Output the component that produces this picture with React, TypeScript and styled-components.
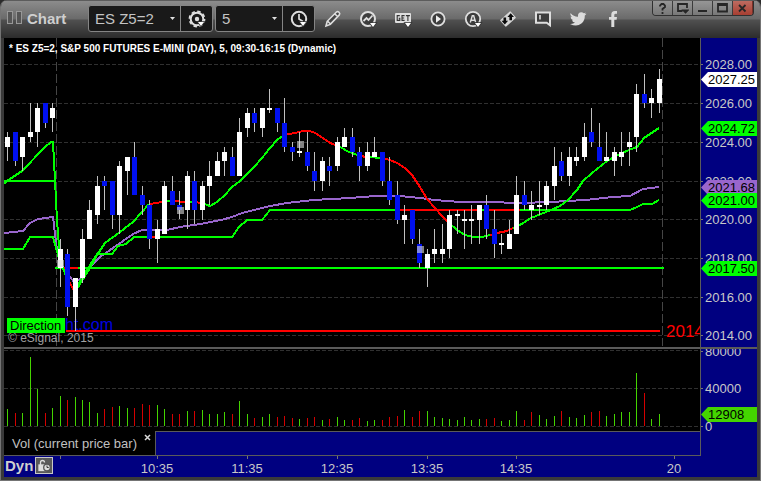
import React from "react";
import styled, { createGlobalStyle } from "styled-components";

const GlobalStyle = createGlobalStyle`
  *, *::before, *::after { box-sizing: border-box; }
  body { margin: 0; background: #2b2b2b; font-family: "Liberation Sans", Arial, sans-serif; }
  button, select { font: inherit; color: inherit; }
  svg { display: block; }
`;

const NAVY = "#000080";
const RULE = "#5a5a5a";

const Window = styled.div`
  display: flex;
  flex-direction: column;
  min-height: 100vh;
  border: 1px solid #747474;
  border-top: 0;
  border-radius: 7px 7px 0 0;
  background: #3a3a3a;
  overflow: hidden;
`;

const TitleBar = styled.header`
  display: flex;
  align-items: flex-start;
  height: 38px;
  padding-left: 6px;
  border-top: 1px solid #5c5c5c;
  background: linear-gradient(#8c8c8c 0, #6a6a6a 18px, #505050 19px, #2c2c2c 37px);
`;

const Brand = styled.div`
  display: flex;
  align-items: center;
  gap: 5px;
  width: 81px;
  height: 34px;
  color: #cfcfcf;
  font-size: 15px;
  font-weight: bold;
`;

const Combos = styled.div`
  display: flex;
  gap: 2px;
  padding-top: 4px;
`;

const Combo = styled.div<{ $field: number }>`
  display: grid;
  grid-template-columns: ${(p) => p.$field}px 31px;
  height: 27px;
  border: 1px solid #858585;
  border-radius: 3px;
  background: #191919;
`;

const Field = styled.label`
  display: grid;
  align-items: center;
  border-right: 1px solid #858585;
  > * { grid-area: 1 / 1; }
  > svg { justify-self: end; margin-right: 5px; pointer-events: none; }
`;

const Select = styled.select`
  width: 100%;
  height: 25px;
  padding: 0 16px 0 6px;
  border: 0;
  outline: 0;
  appearance: none;
  background: transparent;
  color: #c4c4c4;
  font-size: 15px;
`;

const IconButton = styled.button`
  display: flex;
  align-items: center;
  justify-content: center;
  padding: 0;
  border: 0;
  background: transparent;
`;

const Tools = styled.nav`
  display: flex;
  height: 35px;
  > button { width: 35px; }
`;

const WindowControls = styled.div`
  display: grid;
  grid-template-columns: repeat(5, 20px);
  height: 15px;
  margin: 0 6px 0 auto;
  border: 1px solid #303030;
  border-top: 0;
  border-radius: 0 0 4px 4px;
  overflow: hidden;
`;

const ControlButton = styled(IconButton)<{ $danger?: boolean }>`
  border-right: 1px solid ${(p) => (p.$danger ? "#7a3028" : "#3c3c3c")};
  background: ${(p) => (p.$danger ? "linear-gradient(#bd6b60, #a83f32)" : "linear-gradient(#969696, #787878)")};
`;

const Body = styled.main`
  display: grid;
  grid-template-columns: minmax(0, 1fr) 57px;
  grid-template-rows: minmax(309px, 1fr) 84px 25px 21px;
  flex: 1;
  margin: 0 3px 3px;
  background: ${NAVY};
`;

const Pane = styled.section`
  min-width: 0;
  background: #000;
  overflow: hidden;
`;

const PricePane = styled(Pane)`
  display: grid;
  > * { grid-area: 1 / 1; }
`;

const VolumePane = styled(Pane)`
  border-top: 2px solid ${RULE};
`;

const ChartTitle = styled.h1`
  z-index: 1;
  margin: 4px 0 0 5px;
  color: #fff;
  font-size: 10px;
  line-height: 14px;
  height: 14px;
  white-space: nowrap;
`;

const Axis = styled.aside<{ $divided?: boolean }>`
  border-left: 1px solid ${RULE};
  border-top: ${(p) => (p.$divided ? `2px solid ${RULE}` : "0")};
  background: ${NAVY};
  overflow: hidden;
`;

const TabRow = styled.div`
  display: flex;
  border-bottom: 1px solid ${RULE};
`;

const Tab = styled.div`
  display: flex;
  align-items: flex-start;
  gap: 7px;
  width: 151px;
  padding-left: 8px;
  background: #000;
  color: #c0c0c0;
  font-size: 13px;
  line-height: 26px;
  white-space: nowrap;
`;

const TabFill = styled.div`
  flex: 1;
  border-top: 1px solid ${RULE};
  border-left: 1px solid ${RULE};
`;

const TabClose = styled(IconButton)`
  margin-top: 3px;
`;

const AxisEdge = styled.div`
  border-left: 1px solid ${RULE};
`;

const TimeRow = styled.footer`
  display: grid;
  grid-column: 1 / -1;
  > * { grid-area: 1 / 1; }
`;

const Mode = styled.div`
  display: flex;
  gap: 2px;
  padding-left: 1px;
  color: #cfcfcf;
  font-size: 15px;
  font-weight: bold;
  line-height: 19px;
`;

const LockButton = styled(IconButton)`
  z-index: 1;
  width: 18px;
  height: 17px;
  margin-top: 1px;
  border: 1px solid #c8c8c8;
  background: #5a5a5a;
`;

const Canvas = styled.svg`
  width: 100%;
  height: 100%;
  font-family: "Liberation Sans", Arial, sans-serif;
  font-size: 13px;
`;

/* Each bar: high, body top, body bottom, low, rising (1) or falling (0). */
const bars: number[][] = [
  [132,137,147,161,1],[132,132,161,166,0],[137,137,157,171,1],[103,132,137,142,1],[103,108,132,147,1],
  [103,103,123,128,0],[103,108,118,132,1],[239,249,268,287,1],[249,254,307,316,0],[278,278,307,331,1],
  [229,239,278,283,1],[200,210,239,239,1],[176,186,215,224,1],[176,181,186,210,0],[181,181,215,229,0],
  [161,166,215,234,1],[157,157,171,195,1],[142,157,195,195,0],[186,195,205,215,0],[200,205,239,249,0],
  [220,229,239,263,1],[181,186,234,234,1],[176,191,205,205,0],[191,205,210,219,0],[171,176,210,229,1],
  [171,181,210,224,0],[181,186,210,220,1],[161,176,186,205,1],[152,161,176,176,1],[147,152,161,176,1],
  [147,157,176,176,0],[118,132,176,176,1],[108,113,128,137,1],[108,113,123,132,0],[108,108,128,137,1],
  [89,108,110,113,1],[108,108,123,132,0],[98,123,147,152,0],[142,147,152,161,0],[132,151,153,157,1],
  [132,152,166,171,0],[152,171,181,191,0],[157,161,181,191,1],[157,166,171,186,0],[137,142,166,171,1],
  [128,137,147,147,1],[128,137,152,157,0],[147,152,166,181,0],[142,152,166,171,1],[137,152,157,157,1],
  [152,152,181,186,0],[157,181,200,205,0],[181,195,220,224,0],[205,215,220,244,1],[210,210,239,244,0],
  [229,244,263,268,0],[249,254,268,287,1],[229,249,254,263,1],[224,249,254,263,1],[210,215,249,258,1],
  [210,214,216,234,1],[210,219,221,249,1],[205,219,221,244,1],[205,205,220,244,1],[195,205,229,239,0],
  [210,229,244,258,0],[234,243,245,254,1],[220,234,249,249,1],[176,195,234,234,1],[181,195,205,210,0],
  [191,205,210,220,1],[181,205,207,215,1],[181,186,205,210,1],[147,166,186,200,1],[152,161,176,181,0],
  [147,157,176,186,1],[147,157,161,166,1],[123,137,157,161,1],[108,132,142,147,0],[123,147,161,161,0],
  [132,157,161,161,1],[147,152,161,176,1],[132,152,157,166,1],[132,142,147,166,1],[84,94,137,152,1],
  [74,94,103,108,0],[89,98,103,118,1],[69,79,103,113,1],
];

/* Bar heights of the volume pane; negative values are falling bars. */
const volumes = [
  17,-13,13,69,37,-13,18,30,-26,29,26,24,13,-17,-19,20,18,-18,-22,-21,21,17,-12,-12,15,-15,16,12,12,14,-12,25,
  12,-8,9,12,-9,-10,-8,7,-8,-9,6,-7,9,6,-6,-8,5,6,-6,-9,-10,16,-9,-15,15,9,8,7,6,9,6,7,-7,-8,5,6,15,-6,-14,11,
  7,10,-15,9,8,11,-14,-15,10,12,14,14,53,-33,7,12,
];

const barX = (i: number) => Math.floor(7.6 + 7.49 * i);

const GREEN = "#00ff00";
const RED = "#ff0000";
const PURPLE = "#9966cc";

const lines: [string, string][] = [
  [GREEN, "4,181 56,181"],
  [PURPLE, "4,233 23,231 30,223 38,219 53,217 57,250 60,263 70,277 74,282 82,278 90,267 100,257 113,248 133,234 142,230 167,230 180,227 200,224 221,220 232,217 242,213 270,206 287,203 313,200 350,198 375,196 400,196 420,198 435,200 460,202 487,202 520,203 550,202 585,200 613,197 630,196 643,189 659,187"],
  [GREEN, "4,249 23,249 30,237 53,237 60,262"],
  [GREEN, "77,287 82,278 97,254 112,254 118,246 126,244 134,237 152,237"],
  [RED, "152,237 157,237"],
  [GREEN, "157,237 232,237 239,227 247,220 262,220 270,210 397,210"],
  [RED, "397,210 520,210"],
  [GREEN, "482,210 486,210"],
  [GREEN, "520,210 630,210 637,207 643,204 652,204 659,200"],
  [GREEN, "4,184 7,181 22,171 45,147 51,142 53,142 55,180 57,220 60,260 66,276"],
  [RED, "66,276 72,287 75,292"],
  [GREEN, "75,292 90,268 97,255 105,243 120,232 133,222 149,204"],
  [RED, "149,204 157,203 165,201"],
  [GREEN, "165,201 175,201"],
  [RED, "175,201 185,202"],
  [GREEN, "185,202 194,202"],
  [RED, "194,202 202,203"],
  [GREEN, "202,203 210,206 217,202 225,195 232,187 240,181 247,174 255,166 262,158 270,148 277,140 284,135"],
  [RED, "284,135 295,133 303,131 310,131 315,133 323,138 330,143 338,146"],
  [GREEN, "338,146 342,148 347,151 360,156"],
  [RED, "360,156 367,157"],
  [GREEN, "367,157 382,158"],
  [RED, "382,158 390,160 397,163 405,168 412,175 420,187 427,199 435,208 442,216 448,222"],
  [GREEN, "448,222 457,230 465,235 473,237 482,237 490,235"],
  [RED, "490,235 497,233 507,231 513,228"],
  [GREEN, "513,228 520,225 531,218 546,212 560,206 568,200 577,190 583,181 592,173 607,161 620,154 629,150 637,147 644,138 659,128"],
  [GREEN, "55,268 664,268"],
  [RED, "64,268 78,268"],
  [RED, "66,331 660,331"],
];

const priceLabels = [2028, 2026, 2024, 2022, 2020, 2018, 2016, 2014];
const priceY = (p: number) => Math.round(64.4 + (2028 - p) * 19.36);

const priceTags = [
  { text: "2024.72", y: 128, fill: GREEN },
  { text: "2027.25", y: 79, fill: "#ffffff" },
  { text: "2021.68", y: 187, fill: PURPLE },
  { text: "2021.00", y: 200, fill: GREEN },
  { text: "2017.50", y: 268, fill: GREEN },
];

const times = [
  { x: 60, label: "" },
  { x: 157, label: "10:35" },
  { x: 247, label: "11:35" },
  { x: 337, label: "12:35" },
  { x: 427, label: "13:35" },
  { x: 516, label: "14:35" },
  { x: 674, label: "20" },
];

const Tag = ({ y, text, fill }: { y: number; text: string; fill: string }) => (
  <g>
    <path d={`M0 ${y + 0.5}L7 ${y - 7}H56V${y + 8}H7Z`} fill={fill} />
    <text x="7" y={y + 5} fill="#000">{text}</text>
  </g>
);

const GridLine = ({ y }: { y: number }) => (
  <line x1="4" x2="2000" y1={y + 0.5} y2={y + 0.5} stroke="#303030" strokeDasharray="4 2" />
);

const PriceChart = () => (
  <Canvas role="img" aria-label="Price candles">
    <g transform="translate(-4 -38)" shapeRendering="crispEdges">
      {priceLabels.map((p) => <GridLine key={p} y={priceY(p)} />)}
      {[56, 662].map((x) => (
        <line key={x} x1={x + 0.5} x2={x + 0.5} y1="38" y2="346" stroke="#454545" strokeDasharray="9 3" />
      ))}
      <text x="65" y="330" fill="#0000e0" fontSize="16">ht.com</text>
      <text x="8" y="342" fill="#a0a0a0" fontSize="12">© eSignal, 2015</text>
      {lines.map(([color, points], i) => (
        <polyline key={i} points={points} fill="none" stroke={color} strokeWidth="2" />
      ))}
      {bars.map(([high, top, bottom, low, up], i) => (
        <g key={i}>
          <rect x={barX(i)} y={high} width="1" height={low - high} fill="#c0c0c0" />
          <rect x={barX(i) - 2} y={top} width="5" height={bottom - top} fill={up ? "#fff" : "#0010f0"} />
        </g>
      ))}
      {[[57, 260], [177, 207], [297, 141], [417, 246]].map(([x, y]) => (
        <rect key={x} x={x} y={y} width="7" height="7" fill="#d8d8d8" opacity="0.6" />
      ))}
      <rect x="7" y="318" width="58" height="15" fill={GREEN} />
      <text x="10" y="330" fill="#000">Direction</text>
      <text x="666" y="337" fill={RED} fontSize="17">2014</text>
    </g>
  </Canvas>
);

const VolumeChart = () => (
  <Canvas role="img" aria-label="Volume bars">
    <g transform="translate(-4 -349)" shapeRendering="crispEdges">
      {[350, 388, 426].map((y) => <GridLine key={y} y={y} />)}
      {volumes.map((v, i) => (
        <rect key={i} x={barX(i)} y={426 - Math.abs(v)} width="1" height={Math.abs(v)} fill={v > 0 ? "#44d400" : "#d40000"} />
      ))}
    </g>
  </Canvas>
);

const DropMark = ({ x, y }: { x: number; y: number }) => (
  <path d={`M${x - 3} ${y - 2}h6l-3 4z`} fill="#fff" stroke="#333" strokeWidth="1.5" paintOrder="stroke" />
);

const Icon = ({ children }: { children: React.ReactNode }) => (
  <svg width="20" height="20" viewBox="0 0 20 20" fill="none" stroke="#dedede" strokeWidth="2">{children}</svg>
);

const GearIcon = () => (
  <Icon>
    <circle cx="10" cy="10" r="6.3" />
    <circle cx="10" cy="10" r="7.6" strokeWidth="1.6" strokeDasharray="3.5 2.47" />
    <circle cx="10" cy="10" r="2.2" fill="#dedede" stroke="none" />
    <DropMark x={14} y={15} />
  </Icon>
);

const ClockIcon = () => (
  <Icon>
    <circle cx="10" cy="10" r="7.2" />
    <path d="M10 5v5l4 2.5" strokeWidth="1.7" />
    <DropMark x={14} y={15} />
  </Icon>
);

const tools: { name: string; art: React.ReactNode }[] = [
  {
    name: "Draw",
    art: <path d="M3 17l1.2-4.7L13.5 3q1.2-1 2.5.3t.3 2.6L7.3 15.4zM12 5l3 3M5 12.5L7.5 15" fill="#444" strokeWidth="1.6" />,
  },
  {
    name: "Studies",
    art: (
      <>
        <circle cx="10" cy="10" r="7" fill="#3d3d3d" />
        <path d="M5.5 12l3-3 2 2 4-4.5" strokeWidth="1.8" />
        <DropMark x={15} y={16} />
      </>
    ),
  },
  {
    name: "Advanced GET",
    art: (
      <>
        <rect x="2" y="4" width="16" height="10" rx="1" fill="#dedede" stroke="none" />
        <path d="M6.8 6.6H4.2v4.8h2.6V9.2H5.7M11.6 6.6H9v4.8h2.6M9 9h2.2M12.9 6.6h4M14.9 6.6v5.3" stroke="#333" strokeWidth="1.1" />
        <DropMark x={15} y={16} />
      </>
    ),
  },
  {
    name: "Replay",
    art: (
      <>
        <circle cx="10" cy="10" r="6.6" fill="#3d3d3d" strokeWidth="1.8" />
        <path d="M8 6.3v7.4l5-3.7z" fill="#eee" stroke="none" />
      </>
    ),
  },
  {
    name: "Alerts",
    art: (
      <>
        <circle cx="10" cy="10" r="7.2" fill="#3d3d3d" strokeWidth="1.8" />
        <path d="M7.3 13.5L9.300 6.800h1.400L12.700 13.500M8 11.300h4" strokeWidth="1.400" />
        <DropMark x={15} y={16} />
      </>
    ),
  },
  {
    name: "Trade",
    art: (
      <>
        <rect x="3" y="5.500" width="14" height="9" rx="1" fill="#d5d5d5" stroke="none" transform="rotate(-42 10 10)" />
        <path d="M6.800 15.500L3.500 11.800h2V8.500h2.600v3.300h2zM12.700 4.200L16 8h-2v3.300h-2.600V8h-2z" fill="#0b0b0b" stroke="none" />
      </>
    ),
  },
  {
    name: "Notes",
    art: (
      <>
        <path d="M3 3.5h14v12.7l-3.3-2.5H3z" fill="#3d3d3d" />
        <path d="M7 6v4.5" strokeWidth="1.6" />
      </>
    ),
  },
  {
    name: "Twitter",
    art: (
      <path
        d="M2.5 4Q6 8 10 7.8 9.6 3.2 13.3 3.2q1.5 0 2.5 1 1.2-.2 2.1-.8-.4 1.2-1.4 1.900l2-.5q-.7 1.100-1.700 1.800.2 5-3.400 8-4.700 3.800-11.400.4 3.200.2 5-1.400-2.400-.2-3.100-2.400h1.400Q2.600 10.400 2.500 7.600l1.500.4Q1.600 6.200 2.500 4z"
        fill="#dcdcdc"
        stroke="none"
      />
    ),
  },
  {
    name: "Facebook",
    art: <path d="M8.300 18v-7.300H6V8h2.300V5.700Q8.300 2 11.800 2H14v2.800h-1.500q-1.200 0-1.200 1.200v2H14l-.4 2.700h-2.300V18z" fill="#dcdcdc" stroke="none" />,
  },
];

const controls: { name: string; path: string }[] = [
  { name: "Help", path: "M4 4.500V3.500l1.500-1.500h2L9 3.500V5L6.500 7v1.500M6.500 10v2" },
  { name: "Detach", path: "M6.500 9H2V2h9v4M7.500 8.500h4l-2 2z" },
  { name: "Minimize", path: "M2 9h9" },
  { name: "Maximize", path: "M2 2h9v7.500H2zM2 3h9" },
  { name: "Close", path: "M3 3l6.500 6.500M9.500 3L3 9.500" },
];

const SelectArrow = () => (
  <svg width="5" height="3" viewBox="0 0 5 3"><path d="M0 0h5L2.500 3z" fill="#e0e0e0" /></svg>
);

export default function App() {
  return (
    <>
      <GlobalStyle />
      <Window>
        <TitleBar>
          <Brand>
            <svg width="15" height="14" viewBox="0 0 15 14" fill="#555" stroke="#989898">
              <rect x="0.500" y="0.500" width="5" height="12" />
              <rect x="9.500" y="0.500" width="5" height="12" />
            </svg>
            <span>Chart</span>
          </Brand>
          <Combos>
            <Combo $field={92}>
              <Field>
                <Select aria-label="Symbol"><option>ES Z5=2</option></Select>
                <SelectArrow />
              </Field>
              <IconButton aria-label="Symbol settings"><GearIcon /></IconButton>
            </Combo>
            <Combo $field={67}>
              <Field>
                <Select aria-label="Interval"><option>5</option></Select>
                <SelectArrow />
              </Field>
              <IconButton aria-label="Time settings"><ClockIcon /></IconButton>
            </Combo>
          </Combos>
          <Tools>
            {tools.map((t) => (
              <IconButton key={t.name} aria-label={t.name}><Icon>{t.art}</Icon></IconButton>
            ))}
          </Tools>
          <WindowControls>
            {controls.map((c) => (
              <ControlButton key={c.name} aria-label={c.name} $danger={c.name === "Close"}>
                <svg width="13" height="12" viewBox="0 0 13 12" fill="none" stroke="#262626" strokeWidth="1.800"><path d={c.path} /></svg>
              </ControlButton>
            ))}
          </WindowControls>
        </TitleBar>
        <Body>
          <PricePane>
            <ChartTitle>* ES Z5=2, S&amp;P 500 FUTURES E-MINI (DAY), 5, 09:30-16:15 (Dynamic)</ChartTitle>
            <PriceChart />
          </PricePane>
          <Axis>
            <Canvas role="img" aria-label="Price axis">
              <g transform="translate(0 -38)">
                {priceLabels.map((p) => (
                  <g key={p}>
                    <path d={`M0 ${priceY(p) + 0.5}h2`} stroke="#777" />
                    <text x="4" y={priceY(p) + 5} fill="#c8c8c8">{p.toFixed(2)}</text>
                  </g>
                ))}
                {priceTags.map((t) => <Tag key={t.text} {...t} />)}
              </g>
            </Canvas>
          </Axis>
          <VolumePane><VolumeChart /></VolumePane>
          <Axis $divided>
            <Canvas role="img" aria-label="Volume axis">
              <g transform="translate(0 -349)">
                {[["80000", 351], ["40000", 388], ["0", 426]].map(([label, y]) => (
                  <g key={label}>
                    <path d={`M0 ${Number(y) + 0.5}h2`} stroke="#777" />
                    <text x="4" y={Number(y) + 5} fill="#c8c8c8">{label}</text>
                  </g>
                ))}
                <Tag y={414} text="12908" fill="#44d400" />
              </g>
            </Canvas>
          </Axis>
          <TabRow>
            <Tab>
              <span>Vol (current price bar)</span>
              <TabClose aria-label="Close study">
                <svg width="7" height="7" viewBox="0 0 7 7" stroke="#d8d8d8" strokeWidth="1.500"><path d="M1 1l5 5M6 1L1 6" /></svg>
              </TabClose>
            </Tab>
            <TabFill />
          </TabRow>
          <AxisEdge />
          <TimeRow>
            <Canvas role="img" aria-label="Time axis">
              <g transform="translate(-4 -457)" textAnchor="middle">
                {times.map((t) => (
                  <g key={t.x}>
                    <path d={`M${t.x + 0.5} 457v3`} stroke="#777" />
                    <text x={t.x} y="474" fill="#c8c8c8">{t.label}</text>
                  </g>
                ))}
              </g>
            </Canvas>
            <Mode>
              <span>Dyn</span>
              <LockButton aria-label="Lock time range">
                <svg width="14" height="13" viewBox="0 0 14 13" fill="none" stroke="#ddd" strokeWidth="1.300">
                  <path d="M3.500 6V3.500Q3.500 1.500 5.500 1.500T7.500 3.500" />
                  <rect x="2" y="6" width="7" height="5.500" fill="#ddd" />
                  <circle cx="10" cy="8.500" r="3.300" fill="#ddd" stroke="#555" />
                  <path d="M10 6.500v2h1.700" stroke="#333" strokeWidth="1" />
                </svg>
              </LockButton>
            </Mode>
          </TimeRow>
        </Body>
      </Window>
    </>
  );
}
